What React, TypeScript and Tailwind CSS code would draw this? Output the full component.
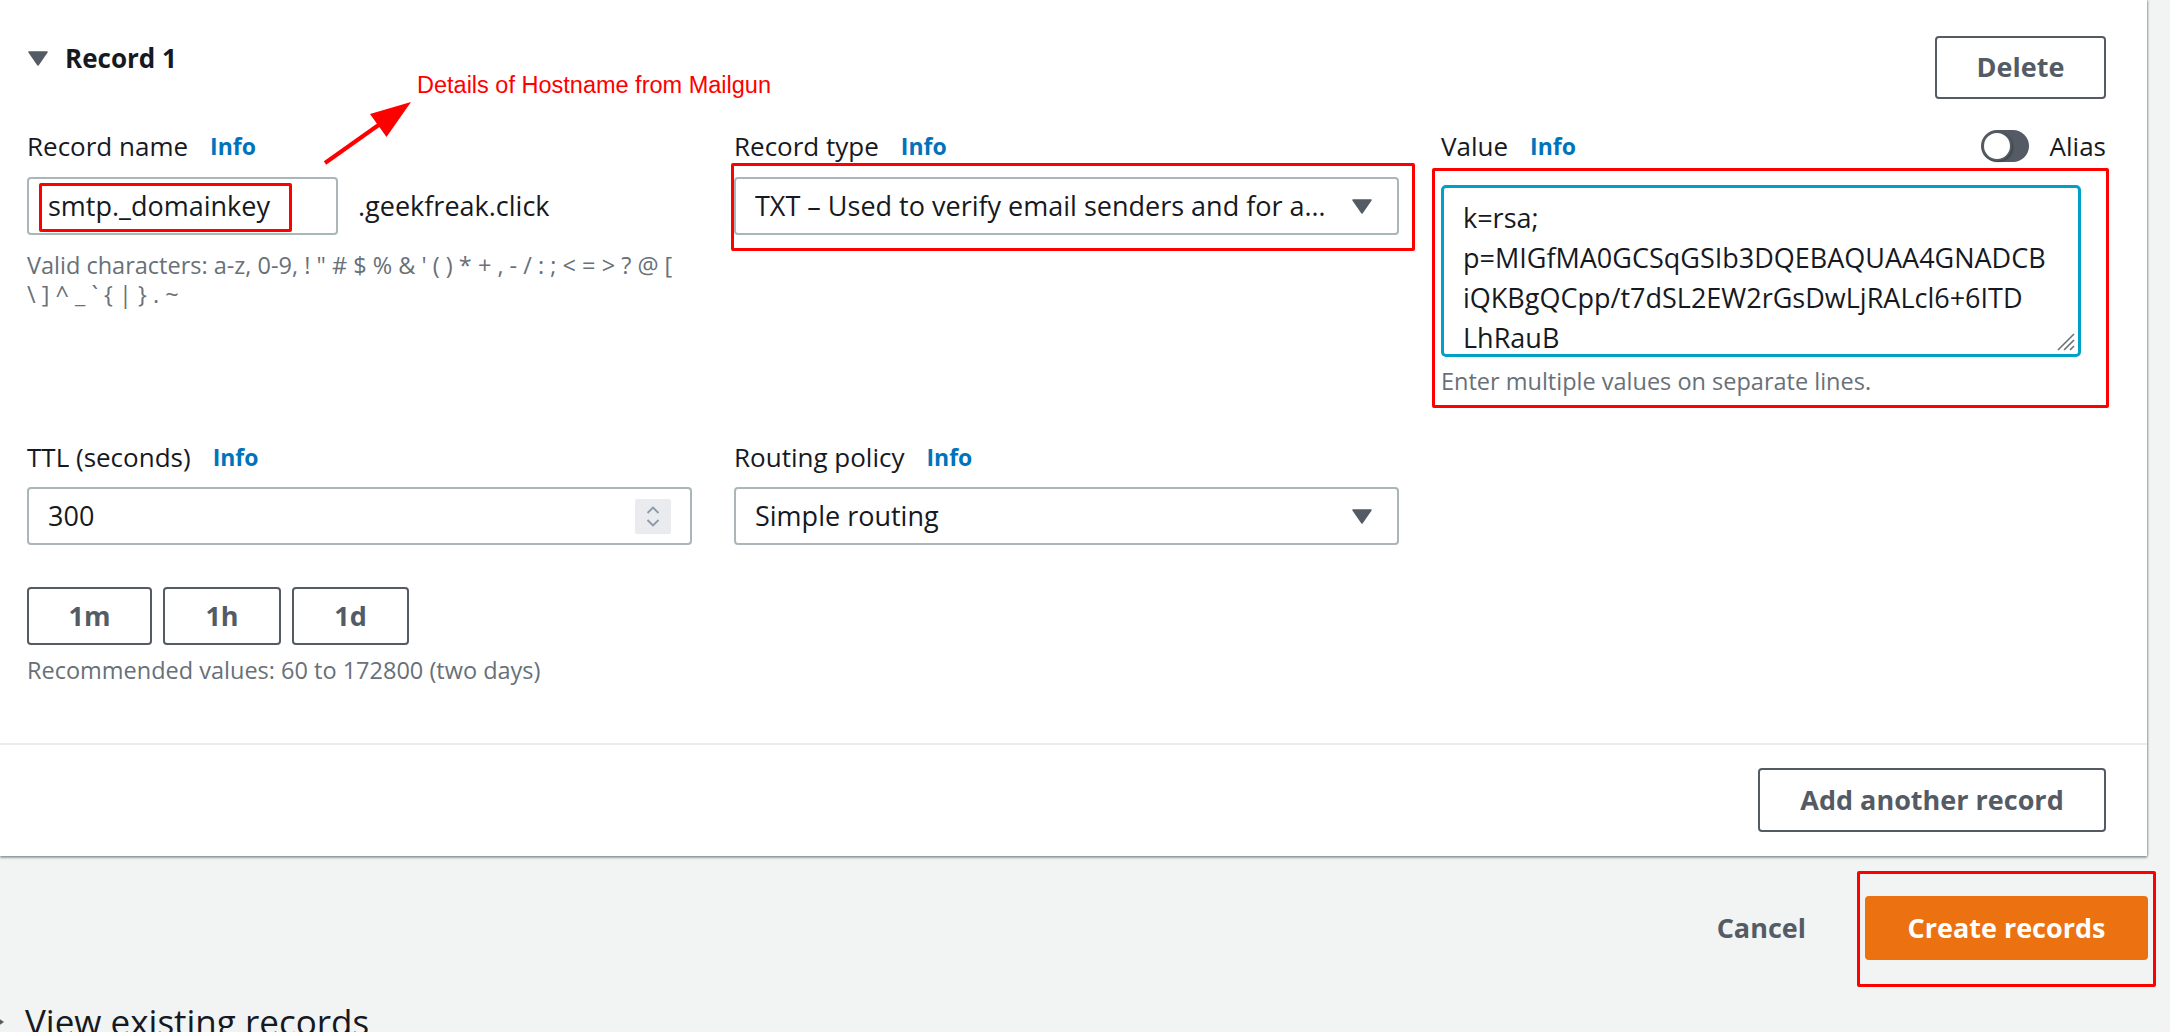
import React from "react";

function Info() {
  return <span className="ml-[22px] text-[23px] font-bold text-[#0073bb]">Info</span>;
}

function Label({ text }: { text: string }) {
  return (
    <div className="flex h-[40px] items-center text-[26px] leading-[40px] text-[#16191f]">
      <span>{text}</span>
      <Info />
    </div>
  );
}

function Caret() {
  return (
    <svg width="20" height="15" viewBox="0 0 20 15">
      <path d="M1 1 H19 L10 14 Z" fill="#545b64" stroke="#545b64" strokeWidth="1.5" strokeLinejoin="round" />
    </svg>
  );
}

function Select({ text }: { text: string }) {
  return (
    <div className="flex h-[58px] items-center rounded-[4px] border-2 border-[#aab7b8] bg-white pl-[19px] pr-[25px]">
      <span className="min-w-0 flex-1 truncate text-[27px] text-[#16191f]">{text}</span>
      <span className="ml-[12px] flex">
        <Caret />
      </span>
    </div>
  );
}

function Btn({ children, w }: { children: React.ReactNode; w: string }) {
  return (
    <div
      className={`flex h-[58px] items-center justify-center rounded-[4px] border-2 border-[#545b64] bg-white text-[27px] font-bold text-[#545b64] ${w}`}
    >
      {children}
    </div>
  );
}

const validLine1 = "Valid characters: a-z, 0-9, ! \" # $ % & ' ( ) * + , - / : ; < = > ? @ [";
const validLine2 = "\\ ] ^ _ ` { | } . ~";

export default function App() {
  return (
    <div className="relative h-[1032px] w-[2170px] overflow-hidden bg-[#f2f3f3] font-['Open_Sans','Noto_Sans',Arial,sans-serif] text-[#16191f]">
      {/* Card */}
      <div className="w-[2147px] bg-white shadow-[1px_0_2px_0_rgba(0,28,36,0.3),0_2px_2px_0_rgba(0,28,36,0.35)]">
        <div className="pb-[58px] pl-[27px] pr-[41px] pt-[36px]">
          {/* Header */}
          <div className="flex h-[63px] items-start justify-between">
            <div className="mt-[2px] flex items-center leading-[40px]">
              <svg width="20" height="15" viewBox="0 0 20 15" className="ml-[1px]">
                <path d="M1 1 H19 L10 14 Z" fill="#545b64" stroke="#545b64" strokeWidth="1.5" strokeLinejoin="round" />
              </svg>
              <span className="ml-[17px] text-[26px] font-bold text-[#16191f]">Record 1</span>
            </div>
            <div className="flex h-[63px] w-[171px] items-center justify-center rounded-[4px] border-2 border-[#545b64] bg-white text-[27px] font-bold text-[#545b64]">
              Delete
            </div>
          </div>

          {/* Row 1 */}
          <div className="mt-[27px] grid grid-cols-[665px_665px_665px] gap-x-[42px]">
            <div>
              <Label text="Record name" />
              <div className="mt-[11px] flex items-center">
                <div className="flex h-[58px] w-[311px] items-center rounded-[4px] border-2 border-[#aab7b8] pl-[19px] text-[27px]">
                  smtp._domainkey
                </div>
                <span className="ml-[20px] text-[27px]">.geekfreak.click</span>
              </div>
              <div className="mt-[16px] whitespace-nowrap text-[23.5px] leading-[29px] text-[#687078]">
                <div>{validLine1}</div>
                <div>{validLine2}</div>
              </div>
            </div>
            <div>
              <Label text="Record type" />
              <div className="mt-[11px]">
                <Select text="TXT – Used to verify email senders and for application-specific values" />
              </div>
            </div>
            <div>
              <div className="flex h-[40px] items-center justify-between">
                <Label text="Value" />
                <div className="flex items-center">
                  <div className="relative h-[32px] w-[48px] rounded-full bg-[#545b64]">
                    <div className="absolute left-[1px] top-[1px] h-[30px] w-[30px] rounded-full border-2 border-[#545b64] bg-white shadow-[1px_1px_2px_rgba(0,0,0,0.3)]" />
                  </div>
                  <span className="ml-[21px] text-[26px] leading-[40px]">Alias</span>
                </div>
              </div>
              <div className="relative mt-[19px] h-[172px] w-[640px] overflow-hidden rounded-[5px] border-[3px] border-[#00a1c9] pl-[19px] pt-[10px] text-[27px] leading-[40px] text-[#16191f]">
                <div className="whitespace-nowrap">k=rsa;</div>
                <div className="whitespace-nowrap">p=MIGfMA0GCSqGSIb3DQEBAQUAA4GNADCB</div>
                <div className="whitespace-nowrap">iQKBgQCpp/t7dSL2EW2rGsDwLjRALcl6+6ITD</div>
                <div className="whitespace-nowrap">LhRauB</div>
                <svg className="absolute bottom-[2px] right-[2px]" width="24" height="24" viewBox="0 0 24 24">
                  <path d="M22 6 L6 22 M22 12 L12 22 M22 18 L18 22" stroke="#687078" strokeWidth="1.6" />
                </svg>
              </div>
              <div className="mt-[10px] text-[23.5px] leading-[29px] text-[#687078]">
                Enter multiple values on separate lines.
              </div>
            </div>
          </div>

          {/* Row 2 */}
          <div className="mt-[41px] grid grid-cols-[665px_665px_665px] gap-x-[42px]">
            <div>
              <Label text="TTL (seconds)" />
              <div className="mt-[10px] flex h-[58px] items-center justify-between rounded-[4px] border-2 border-[#aab7b8] pl-[19px] pr-[19px] text-[27px]">
                <span>300</span>
                <div className="flex h-[35px] w-[36px] flex-col items-center justify-center gap-[5px] rounded-[2px] bg-[#e9ebee]">
                  <svg width="14" height="8" viewBox="0 0 14 8">
                    <path d="M1.5 7 L7 1.5 L12.5 7" stroke="#8d99a8" strokeWidth="1.8" fill="none" />
                  </svg>
                  <svg width="14" height="8" viewBox="0 0 14 8">
                    <path d="M1.5 1 L7 6.5 L12.5 1" stroke="#8d99a8" strokeWidth="1.8" fill="none" />
                  </svg>
                </div>
              </div>
              <div className="mt-[42px] flex gap-[11px]">
                <Btn w="w-[125px]">1m</Btn>
                <Btn w="w-[118px]">1h</Btn>
                <Btn w="w-[117px]">1d</Btn>
              </div>
              <div className="mt-[11px] text-[23.5px] leading-[29px] text-[#687078]">
                Recommended values: 60 to 172800 (two days)
              </div>
            </div>
            <div>
              <Label text="Routing policy" />
              <div className="mt-[10px]">
                <Select text="Simple routing" />
              </div>
            </div>
            <div />
          </div>
        </div>
        <div className="h-[2px] bg-[#eaeded]" />
        <div className="flex justify-end pb-[24px] pr-[41px] pt-[23px]">
          <div className="flex h-[64px] w-[348px] items-center justify-center rounded-[4px] border-2 border-[#545b64] bg-white text-[27px] font-bold text-[#545b64]">
            Add another record
          </div>
        </div>
      </div>

      {/* Actions */}
      <div className="mt-[40px] flex w-[2148px] items-center justify-end">
        <span className="mr-[59px] text-[27px] font-bold text-[#545b64]">Cancel</span>
        <div className="flex h-[64px] w-[283px] items-center justify-center rounded-[4px] bg-[#ec7211] text-[27px] font-bold text-white">
          Create records
        </div>
      </div>

      <div className="mt-[40px] flex items-center">
        <svg width="15" height="20" viewBox="0 0 15 20" className="ml-[-10px]">
          <path d="M1 1 V19 L14 10 Z" fill="#545b64" />
        </svg>
        <span className="ml-[20px] text-[35px] leading-[44px] text-[#16191f]">View existing records</span>
      </div>

      {/* Annotations */}
      <div className="absolute left-[417px] top-[74px] whitespace-nowrap font-['Liberation_Sans',Arial,sans-serif] text-[23.5px] leading-[23px] text-[#ff0000]">
        Details of Hostname from Mailgun
      </div>
      <svg className="absolute left-[318px] top-[96px]" width="100" height="72" viewBox="318 96 100 72">
        <line x1="325" y1="163" x2="380" y2="124" stroke="#ff0000" strokeWidth="4" />
        <polygon points="411,102 386.5,137 370,114" fill="#ff0000" />
      </svg>
      <div className="absolute left-[39px] top-[183px] h-[49px] w-[253px] rounded-[2px] border-[3px] border-[#ff0000]" />
      <div className="absolute left-[731px] top-[163px] h-[88px] w-[684px] rounded-[2px] border-[3px] border-[#ff0000]" />
      <div className="absolute left-[1432px] top-[168px] h-[240px] w-[677px] rounded-[2px] border-[3px] border-[#ff0000]" />
      <div className="absolute left-[1857px] top-[871px] h-[116px] w-[299px] rounded-[2px] border-[3px] border-[#ff0000]" />
    </div>
  );
}
